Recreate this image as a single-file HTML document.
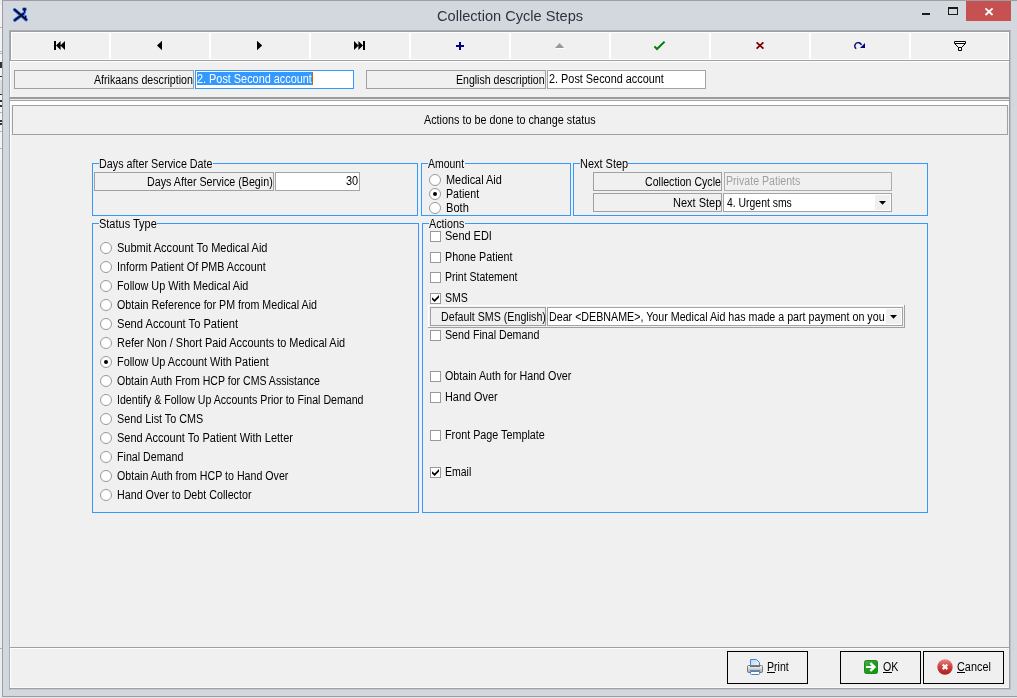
<!DOCTYPE html>
<html lang="en"><head><meta charset="utf-8"><title>Collection Cycle Steps</title>
<style>
html,body{margin:0;padding:0}
body{width:1017px;height:698px;overflow:hidden;position:relative;background:#d3d7de;font-family:"Liberation Sans", Arial, sans-serif;font-size:12.5px;color:#000}
div,span,svg{position:absolute;box-sizing:border-box}
.t{white-space:nowrap;line-height:16px;height:16px;transform-origin:0 0;letter-spacing:0}
.t u{text-decoration:none;position:static}
.ul{height:1px;background:#000}
.face{background:#f0f0f0}
.lbl{border:1px solid #a0a0a0;background:#f0f0f0}
.edit{border:1px solid #a4a4a4;background:#fff}
.grp{border:1px solid #3399ff}
.cap{background:#f0f0f0;height:3px}
.rad{width:12px;height:12px;border:1px solid #999;border-radius:50%;background:#fff}
.rad.on::after{content:"";position:absolute;left:3px;top:3px;width:4px;height:4px;border-radius:50%;background:#000}
.chk{width:11px;height:11px;border:1px solid #999;background:#fff}
.btn{border:1px solid #000;background:#f0f0f0}
.tb{top:33px;height:26px;width:97px;background:#f0f0f0}
#root{left:0;top:0;width:1017px;height:698px;will-change:transform;overflow:hidden}
</style></head><body><div id="root">

<!-- desktop sliver behind window -->
<div style="left:0;top:0;width:2px;height:698px;background:#ececec"></div>
<div style="left:0;top:5px;width:2px;height:155px;background:#f3f3f3"></div>
<div style="left:0;top:80px;width:2px;height:14px;background:#dcdcdc"></div>
<div style="left:0;top:27px;width:2px;height:1px;background:#b4b4b4"></div>
<div style="left:0;top:51px;width:2px;height:1px;background:#b4b4b4"></div>
<div style="left:0;top:53px;width:2px;height:1px;background:#b4b4b4"></div>
<div style="left:0;top:112px;width:2px;height:1px;background:#b4b4b4"></div>
<div style="left:0;top:131px;width:2px;height:1px;background:#b4b4b4"></div>
<div style="left:0;top:148px;width:2px;height:1px;background:#b4b4b4"></div>
<div style="left:0;top:62px;width:2px;height:6px;background:#333"></div>
<div style="left:0;top:76px;width:2px;height:1px;background:#333"></div>
<div style="left:0;top:94px;width:2px;height:1px;background:#333"></div>
<div style="left:0;top:100px;width:2px;height:2px;background:#333"></div>
<div style="left:0;top:105px;width:2px;height:2px;background:#333"></div>
<div style="left:0;top:120px;width:2px;height:2px;background:#333"></div>
<div style="left:0;top:123px;width:2px;height:2px;background:#333"></div>
<div style="left:0;top:648px;width:2px;height:1px;background:#b0b0b0"></div>
<div style="left:0;top:697px;width:1017px;height:1px;background:#e6e6e6"></div>
<!-- window outer border -->
<div style="left:2px;top:0;width:1px;height:697px;background:#9a9fa6"></div>
<div style="left:2px;top:0;width:1015px;height:1px;background:#9a9fa6"></div>
<div style="left:2px;top:696px;width:1015px;height:1px;background:#9a9fa6"></div>
<svg style="left:11px;top:5px" width="20" height="20" viewBox="0 0 20 20">
<g fill="none" stroke="#2f62ff" stroke-linecap="round" stroke-linejoin="round">
<path d="M3.6 4.7 L15.2 14.6" stroke-width="3.4"/><path d="M3.8 15.2 L12.3 8.8" stroke-width="3.4"/>
<path d="M12.3 8.8 L13.6 7.5 V5" stroke-width="2.6"/><path d="M12.6 3.8 h1.8 v.9 h-1.8z" stroke-width="2.6"/>
<path d="M14.5 11.4 V14.3" stroke-width="2.6"/></g>
<g fill="none" stroke="#0a0a0a" stroke-linecap="round" stroke-linejoin="round">
<path d="M3.6 4.7 L15.2 14.6" stroke-width="1.6"/><path d="M3.8 15.2 L12.3 8.8" stroke-width="1.6"/>
<path d="M12.3 8.8 L13.6 7.5 V5" stroke-width="1"/><path d="M12.6 3.8 h1.8 v.9 h-1.8z" stroke-width="1" fill="#0a0a0a"/>
<path d="M14.5 11.4 V14.3" stroke-width="1"/></g>
</svg>
<div style="left:922px;top:13px;width:8px;height:2px;background:#1a1a1a"></div>
<div style="left:948px;top:7px;width:10px;height:8px;border:1px solid #1a1a1a;border-top-width:2px"></div>
<div style="left:966px;top:1px;width:45px;height:20px;background:#c75050"></div>
<svg style="left:984px;top:7px" width="10" height="9" viewBox="0 0 10 9"><path d="M1.5 1.4 L8.6 8 M8.6 1.4 L1.5 8" stroke="#fff" stroke-width="1.8" fill="none"/></svg>
<!-- client -->
<div style="left:9px;top:30px;width:1002px;height:660px;background:#a9adb3"></div>
<div class="face" style="left:10px;top:31px;width:999px;height:657px"></div>
<div style="left:1009px;top:31px;width:1px;height:658px;background:#a0a0a0"></div>
<div style="left:1010px;top:31px;width:1px;height:658px;background:#bcc0c6"></div>
<div style="left:10px;top:688px;width:1000px;height:1px;background:#a0a0a0"></div>
<div style="left:10px;top:689px;width:1001px;height:1px;background:#c4c8ce"></div>
<div style="left:10px;top:31px;width:1000px;height:30px;background:#a0a0a0"></div>
<div style="left:11px;top:32px;width:998px;height:28px;background:#fff"></div>
<div class="tb" style="left:12px;width:97px"></div>
<div class="tb" style="left:111px;width:98px"></div>
<div class="tb" style="left:211px;width:98px"></div>
<div class="tb" style="left:311px;width:98px"></div>
<div class="tb" style="left:411px;width:98px"></div>
<div class="tb" style="left:511px;width:98px"></div>
<div class="tb" style="left:611px;width:98px"></div>
<div class="tb" style="left:711px;width:98px"></div>
<div class="tb" style="left:811px;width:98px"></div>
<div class="tb" style="left:911px;width:97px"></div>
<svg style="left:50px;top:38px" width="20" height="16" viewBox="50 38 20 16"><path d="M54 41h2v9h-2z M56 45.5 L60.6 41v9z M60.4 45.5 L65 41v9z" fill="#000"/></svg>
<svg style="left:150px;top:38px" width="20" height="16" viewBox="150 38 20 16"><path d="M157 45.5 L162 40.7v9.6z" fill="#000"/></svg>
<svg style="left:250px;top:38px" width="20" height="16" viewBox="250 38 20 16"><path d="M262.2 45.5 L257 40.7v9.6z" fill="#000"/></svg>
<svg style="left:350px;top:38px" width="20" height="16" viewBox="350 38 20 16"><path d="M363 41h2v9h-2z M363 45.5 L358.4 41v9z M358.6 45.5 L354 41v9z" fill="#000"/></svg>
<svg style="left:450px;top:38px" width="20" height="16" viewBox="450 38 20 16"><path d="M456 45h8v2h-8z M459 42h2v8h-2z" fill="#000080"/></svg>
<svg style="left:550px;top:38px" width="20" height="16" viewBox="550 38 20 16"><path d="M556 49 L560.5 44 L565.5 49z" fill="#fff"/><path d="M555 48 L559.6 43 L564.2 48z" fill="#999"/></svg>
<svg style="left:650px;top:38px" width="20" height="16" viewBox="650 38 20 16"><path d="M654.4 46.4 L657 49 L664.6 41.6" fill="none" stroke="#008000" stroke-width="2"/></svg>
<svg style="left:750px;top:38px" width="20" height="16" viewBox="750 38 20 16"><path d="M756.6 42.4 L763.4 48.6 M763.4 42.4 L756.6 48.6" fill="none" stroke="#800000" stroke-width="1.8"/></svg>
<svg style="left:850px;top:38px" width="20" height="16" viewBox="850 38 20 16"><path d="M856.2 48.8 A3.4 3.4 0 1 1 861.4 45" fill="none" stroke="#000080" stroke-width="1.4"/><path d="M860 48 L865 48 L865 43z" fill="#000080"/></svg>
<svg style="left:950px;top:38px" width="20" height="16" viewBox="950 38 20 16"><path d="M954.5 41.5h11v2h-11z M955 44 L958.5 47.5 M965 44 L961.5 47.5 M958.5 47.5h3v3h-3z" fill="#fff" stroke="#000" stroke-width="1"/></svg>
<div style="left:10px;top:61px;width:999px;height:1px;background:#fff"></div>
<div style="left:10px;top:61px;width:1px;height:627px;background:#fff"></div>
<div style="left:10px;top:97px;width:999px;height:2px;background:#9c9c9c"></div>
<div style="left:10px;top:99px;width:999px;height:1px;background:#ececec"></div>
<div style="left:10px;top:100px;width:999px;height:1px;background:#a4a4a4"></div>
<div style="left:10px;top:101px;width:999px;height:4px;background:#fff"></div>
<div class="lbl" style="left:14px;top:70px;width:180px;height:19px"></div>
<div class="edit" style="left:195px;top:70px;width:159px;height:19px;border-color:#3399ff"></div>
<div style="left:197px;top:72px;width:116px;height:13px;background:#3399ff"></div>
<div style="left:312px;top:72px;width:1px;height:13px;background:#cc6600"></div>
<div class="lbl" style="left:366px;top:70px;width:180px;height:19px"></div>
<div class="edit" style="left:547px;top:70px;width:159px;height:19px;"></div>
<div class="lbl" style="left:12px;top:105px;width:996px;height:30px"></div>
<div class="grp" style="left:92px;top:163px;width:326px;height:53px"></div>
<div class="cap" style="left:99px;top:162px;width:114px"></div>
<div class="grp" style="left:421px;top:163px;width:150px;height:53px"></div>
<div class="cap" style="left:428px;top:162px;width:37px"></div>
<div class="grp" style="left:573px;top:163px;width:355px;height:53px"></div>
<div class="cap" style="left:580px;top:162px;width:48px"></div>
<div class="grp" style="left:92px;top:223px;width:327px;height:290px"></div>
<div class="cap" style="left:99px;top:222px;width:58px"></div>
<div class="grp" style="left:422px;top:223px;width:506px;height:290px"></div>
<div class="cap" style="left:429px;top:222px;width:36px"></div>
<div class="lbl" style="left:94px;top:172px;width:180px;height:19px"></div>
<div class="edit" style="left:275px;top:172px;width:85px;height:19px;"></div>
<div class="lbl" style="left:593px;top:172px;width:129px;height:19px"></div>
<div class="edit" style="left:724px;top:172px;width:168px;height:19px;background:#f0f0f0;border-color:#adadad"></div>
<div class="lbl" style="left:593px;top:193px;width:129px;height:19px"></div>
<div class="edit" style="left:723px;top:193px;width:169px;height:19px;"></div>
<div class="face" style="left:875px;top:195px;width:15px;height:15px"></div>
<svg style="left:878px;top:200px" width="9" height="6" viewBox="0 0 9 6"><path d="M1 1h7L4.5 4.8z" fill="#000"/></svg>
<div class="rad" style="left:429px;top:174px"></div>
<div class="rad on" style="left:429px;top:188px"></div>
<div class="rad" style="left:429px;top:202px"></div>
<div class="rad" style="left:100px;top:242px"></div>
<div class="rad" style="left:100px;top:261px"></div>
<div class="rad" style="left:100px;top:280px"></div>
<div class="rad" style="left:100px;top:299px"></div>
<div class="rad" style="left:100px;top:318px"></div>
<div class="rad" style="left:100px;top:337px"></div>
<div class="rad on" style="left:100px;top:356px"></div>
<div class="rad" style="left:100px;top:375px"></div>
<div class="rad" style="left:100px;top:394px"></div>
<div class="rad" style="left:100px;top:413px"></div>
<div class="rad" style="left:100px;top:432px"></div>
<div class="rad" style="left:100px;top:451px"></div>
<div class="rad" style="left:100px;top:470px"></div>
<div class="rad" style="left:100px;top:489px"></div>
<div class="chk" style="left:430px;top:231px"></div>
<div class="chk" style="left:430px;top:252px"></div>
<div class="chk" style="left:430px;top:272px"></div>
<div class="chk" style="left:430px;top:293px"></div>
<svg style="left:432px;top:295px" width="7" height="7" viewBox="0 0 7 7"><path d="M0 2.2 L2.6 4.6 L7 0 L7 2.6 L2.6 7 L0 4.6z" fill="#000"/></svg>
<div class="chk" style="left:430px;top:330px"></div>
<div class="chk" style="left:430px;top:371px"></div>
<div class="chk" style="left:430px;top:392px"></div>
<div class="chk" style="left:430px;top:430px"></div>
<div class="chk" style="left:430px;top:467px"></div>
<svg style="left:432px;top:469px" width="7" height="7" viewBox="0 0 7 7"><path d="M0 2.2 L2.6 4.6 L7 0 L7 2.6 L2.6 7 L0 4.6z" fill="#000"/></svg>
<div style="left:428px;top:305px;width:477px;height:23px;background:#a0a0a0"></div>
<div style="left:428px;top:305px;width:476px;height:22px;background:#fff"></div>
<div class="face" style="left:429px;top:306px;width:475px;height:21px"></div>
<div class="lbl" style="left:430px;top:307px;width:116px;height:19px"></div>
<div class="edit" style="left:547px;top:307px;width:356px;height:19px;"></div>
<div class="face" style="left:886px;top:309px;width:15px;height:15px"></div>
<svg style="left:889px;top:314px" width="9" height="6" viewBox="0 0 9 6"><path d="M1 1h7L4.5 4.8z" fill="#000"/></svg>
<div style="left:10px;top:647px;width:999px;height:1px;background:#a0a0a0"></div>
<div style="left:10px;top:648px;width:999px;height:1px;background:#fff"></div>
<div style="left:11px;top:687px;width:998px;height:1px;background:#fafafa"></div>
<div class="btn" style="left:727px;top:651px;width:81px;height:33px"></div>
<div class="btn" style="left:840px;top:651px;width:81px;height:33px"></div>
<div class="btn" style="left:923px;top:651px;width:81px;height:33px"></div>
<div class="ul" style="left:767px;top:672px;width:8px"></div>
<div class="ul" style="left:883px;top:672px;width:9px"></div>
<div class="ul" style="left:957px;top:672px;width:8px"></div>
<svg style="left:747px;top:659px" width="16" height="16" viewBox="0 0 16 16">
<defs><linearGradient id="pg" x1="0" y1="0" x2="1" y2="1"><stop offset="0" stop-color="#b9d3f3"/><stop offset="1" stop-color="#f4f9ff"/></linearGradient>
<linearGradient id="pb" x1="0" y1="0" x2="0" y2="1"><stop offset="0" stop-color="#fafafa"/><stop offset=".5" stop-color="#d2d2d2"/><stop offset="1" stop-color="#a6a6a6"/></linearGradient></defs>
<path d="M3.5 .5h6l3 3v5h-9z" fill="url(#pg)" stroke="#3f87d6"/>
<path d="M1.5 6.5 q-1 0-1 1.2v4.6q0 1.2 1 1.2h13q1 0 1-1.2v-4.6q0-1.2-1-1.2z" fill="url(#pb)" stroke="#6d6d6d" stroke-width=".9"/>
<path d="M3 7.5h10" stroke="#6e6e6e" stroke-width="1"/>
<path d="M3 11.4h10" stroke="#7d7d7d" stroke-width="1"/>
<path d="M3.5 12.5h9v2q0 1-1 1h-7q-1 0-1-1z" fill="#fff" stroke="#3f87d6"/>
</svg>
<svg style="left:864px;top:660px" width="14" height="14" viewBox="0 0 14 14">
<defs><linearGradient id="og" x1="0" y1="0" x2="1" y2="1"><stop offset="0" stop-color="#4cb04c"/><stop offset=".5" stop-color="#1f9a1f"/><stop offset="1" stop-color="#0a9a0a"/></linearGradient></defs>
<rect x=".5" y=".5" width="13" height="13" rx="1.8" fill="url(#og)" stroke="#1b8a1b"/>
<path d="M2.1 5.9H7.6L5.5 3.8 7.2 2.2 12.2 7 7.2 11.8 5.5 10.2 7.6 8.1H2.1z" fill="#fff"/>
</svg>
<svg style="left:937px;top:659px" width="16" height="16" viewBox="0 0 16 16">
<defs><linearGradient id="cg" x1="0" y1="0" x2="0" y2="1"><stop offset="0" stop-color="#e88585"/><stop offset=".45" stop-color="#cf4545"/><stop offset="1" stop-color="#b11c1c"/></linearGradient></defs>
<circle cx="8" cy="8" r="7.7" fill="url(#cg)"/>
<path d="M5.7 5.5 L10.3 10.1 M10.3 5.5 L5.7 10.1" stroke="#fff" stroke-width="2.2" fill="none"/>
</svg>
<span class="t" style="left:94px;top:72px;transform:scaleX(0.8524)">Afrikaans description</span>
<span class="t" style="left:456px;top:72px;transform:scaleX(0.8443)">English description</span>
<span class="t" style="left:147px;top:174px;transform:scaleX(0.8579)">Days After Service (Begin)</span>
<span class="t" style="left:645px;top:174px;transform:scaleX(0.8465)">Collection Cycle</span>
<span class="t" style="left:673px;top:195px;transform:scaleX(0.8797)">Next Step</span>
<span class="t" style="left:441px;top:309px;transform:scaleX(0.8529)">Default SMS (English)</span>
<span class="t" style="left:197px;top:71px;transform:scaleX(0.8699);color:#fff">2. Post Second account</span>
<span class="t" style="left:549px;top:71px;transform:scaleX(0.8699)">2. Post Second account</span>
<span class="t" style="left:346px;top:173px;transform:scaleX(0.8757)">30</span>
<span class="t" style="left:726px;top:173px;transform:scaleX(0.8494);color:#a0a0a0">Private Patients</span>
<span class="t" style="left:727px;top:195px;transform:scaleX(0.8326)">4. Urgent sms</span>
<span class="t" style="left:549px;top:309px;transform:scaleX(0.8548)">Dear &lt;DEBNAME&gt;, Your Medical Aid has made a part payment on you</span>
<span class="t" style="left:99px;top:156px;transform:scaleX(0.8604)">Days after Service Date</span>
<span class="t" style="left:428px;top:156px;transform:scaleX(0.8383)">Amount</span>
<span class="t" style="left:580px;top:156px;transform:scaleX(0.8766)">Next Step</span>
<span class="t" style="left:99px;top:216px;transform:scaleX(0.8781)">Status Type</span>
<span class="t" style="left:429px;top:216px;transform:scaleX(0.8640)">Actions</span>
<span class="t" style="left:446px;top:172px;transform:scaleX(0.8727)">Medical Aid</span>
<span class="t" style="left:446px;top:186px;transform:scaleX(0.8524)">Patient</span>
<span class="t" style="left:446px;top:200px;transform:scaleX(0.8867)">Both</span>
<span class="t" style="left:117px;top:240px;transform:scaleX(0.8817)">Submit Account To Medical Aid</span>
<span class="t" style="left:117px;top:259px;transform:scaleX(0.8591)">Inform Patient Of PMB Account</span>
<span class="t" style="left:117px;top:278px;transform:scaleX(0.8676)">Follow Up With Medical Aid</span>
<span class="t" style="left:117px;top:297px;transform:scaleX(0.8541)">Obtain Reference for PM from Medical Aid</span>
<span class="t" style="left:117px;top:316px;transform:scaleX(0.8904)">Send Account To Patient</span>
<span class="t" style="left:117px;top:335px;transform:scaleX(0.8733)">Refer Non / Short Paid Accounts to Medical Aid</span>
<span class="t" style="left:117px;top:354px;transform:scaleX(0.8699)">Follow Up Account With Patient</span>
<span class="t" style="left:117px;top:373px;transform:scaleX(0.8450)">Obtain Auth From HCP for CMS Assistance</span>
<span class="t" style="left:117px;top:392px;transform:scaleX(0.8488)">Identify &amp; Follow Up Accounts Prior to Final Demand</span>
<span class="t" style="left:117px;top:411px;transform:scaleX(0.8646)">Send List To CMS</span>
<span class="t" style="left:117px;top:430px;transform:scaleX(0.8801)">Send Account To Patient With Letter</span>
<span class="t" style="left:117px;top:449px;transform:scaleX(0.8531)">Final Demand</span>
<span class="t" style="left:117px;top:468px;transform:scaleX(0.8515)">Obtain Auth from HCP to Hand Over</span>
<span class="t" style="left:117px;top:487px;transform:scaleX(0.8564)">Hand Over to Debt Collector</span>
<span class="t" style="left:445px;top:228px;transform:scaleX(0.8750)">Send EDI</span>
<span class="t" style="left:445px;top:249px;transform:scaleX(0.8594)">Phone Patient</span>
<span class="t" style="left:445px;top:269px;transform:scaleX(0.8412)">Print Statement</span>
<span class="t" style="left:445px;top:290px;transform:scaleX(0.8457)">SMS</span>
<span class="t" style="left:445px;top:327px;transform:scaleX(0.8537)">Send Final Demand</span>
<span class="t" style="left:445px;top:368px;transform:scaleX(0.8573)">Obtain Auth for Hand Over</span>
<span class="t" style="left:445px;top:389px;transform:scaleX(0.8698)">Hand Over</span>
<span class="t" style="left:445px;top:427px;transform:scaleX(0.8620)">Front Page Template</span>
<span class="t" style="left:445px;top:464px;transform:scaleX(0.8413)">Email</span>
<span class="t" style="left:424px;top:112px;transform:scaleX(0.8635)">Actions to be done to change status</span>
<span class="t" style="left:767px;top:659px;transform:scaleX(0.8445)"><u>P</u>rint</span>
<span class="t" style="left:883px;top:659px;transform:scaleX(0.8510)"><u>O</u>K</span>
<span class="t" style="left:957px;top:659px;transform:scaleX(0.8698)"><u>C</u>ancel</span>
<span class="t" style="left:437px;top:8px;transform:scaleX(1.0072);font-size:14.5px;color:#30323c">Collection Cycle Steps</span>
</div></body></html>
